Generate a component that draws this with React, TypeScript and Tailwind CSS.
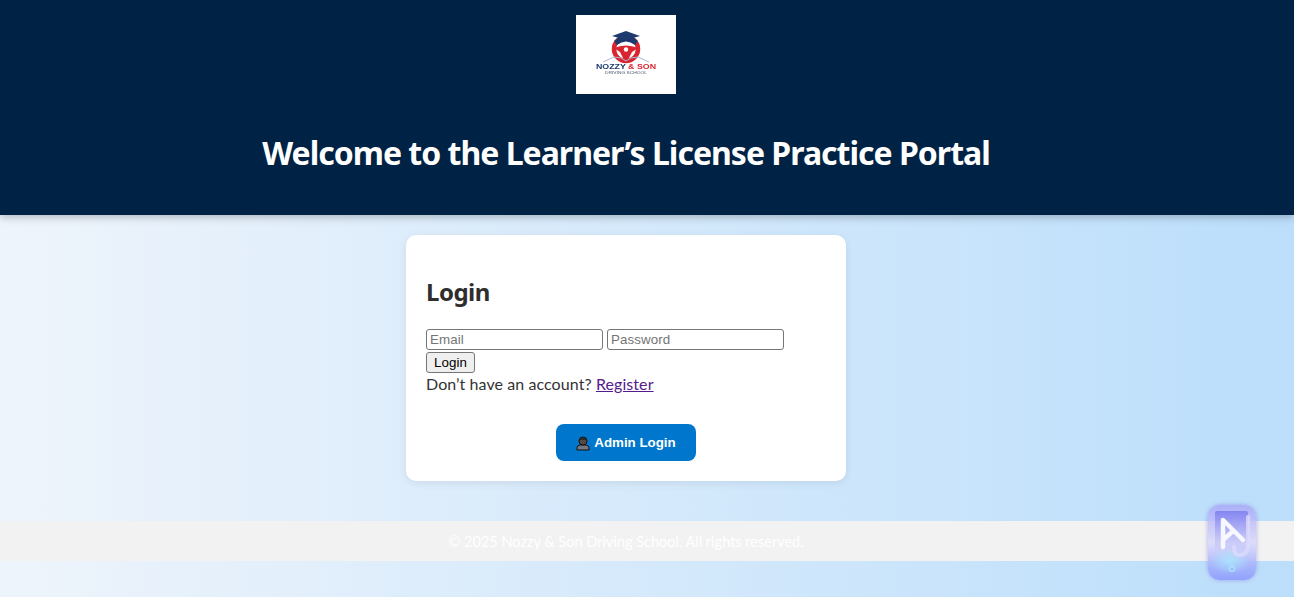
export default function App() {
  const seg = "font-['Lato','Noto_Sans',sans-serif]";
  const control = "font-['Liberation_Sans',sans-serif] text-[13.33px]";
  return (
    <div className={`relative h-[597px] w-full overflow-hidden bg-gradient-to-r from-[#eef4fb] to-[#bbdefb] ${seg}`}>
      <header className="relative z-10 flex h-[215px] flex-col bg-[#002244] pr-[42px] pt-[15px] shadow-[0_2px_8px_rgba(0,0,0,0.25)]">
        <div className="flex justify-center">
          <svg width="100" height="79" viewBox="0 0 100 79" className="bg-white">
            <g className="blur-[0.35px]">
              <circle cx="50" cy="34" r="12" fill="none" stroke="#d9252f" strokeWidth="4.5" />
              <path d="M38 26 Q50 15 62 26 L59 30 Q50 23 41 30 Z" fill="#1d3a6e" />
              <path d="M36 21 L50 16 L64 21 L50 25 Z" fill="#1d3a6e" />
              <path d="M38 33 Q50 28 62 33 L56 37 L52 45 L48 45 L44 37 Z" fill="#d9252f" />
              <circle cx="50" cy="34.5" r="2.2" fill="#fff" />
              <path d="M27 47 L38 42 Q46 42 50 46 Q54 42 62 42 L73 47" fill="none" stroke="#a9b7cc" strokeWidth="1" />
              <text x="50" y="54" textAnchor="middle" fontSize="8" fontWeight="800" fontFamily="Liberation Sans, sans-serif" textLength="60" lengthAdjust="spacingAndGlyphs">
                <tspan fill="#1d3a6e">NOZZY </tspan>
                <tspan fill="#d9252f">&amp; SON</tspan>
              </text>
              <text x="50" y="58.5" textAnchor="middle" fontSize="4" fill="#44546a" fontFamily="Liberation Sans, sans-serif" textLength="42" lengthAdjust="spacingAndGlyphs">DRIVING SCHOOL</text>
            </g>
          </svg>
        </div>
        <h1 className="mt-[37px] text-center font-['Noto_Sans',sans-serif] text-[32px] font-bold leading-[44px] tracking-[-1px] text-white">Welcome to the Learner’s License Practice Portal</h1>
      </header>

      <main className="flex w-[1252px] flex-col items-center">
        <section className="mt-5 h-[246px] w-[440px] rounded-[10px] bg-white p-5 shadow-[0_2px_8px_rgba(0,0,0,0.08)]">
          <h2 className="mt-[21px] font-['Noto_Sans',sans-serif] text-2xl font-bold leading-8 tracking-[-0.5px] text-[#2e2e2e]">Login</h2>
          <form className="mt-[21px] text-base leading-[22px] tracking-[0.08px] text-[#333]">
            <div className="flex gap-1">
              <input placeholder="Email" className={`h-[21px] w-[177px] rounded-[3px] border border-[#767676] bg-white px-[3px] placeholder:text-[#757575] ${control}`} />
              <input placeholder="Password" className={`h-[21px] w-[177px] rounded-[3px] border border-[#767676] bg-white px-[3px] placeholder:text-[#757575] ${control}`} />
            </div>
            <button type="button" className={`mt-[2px] block h-[21px] w-[49px] rounded-[3px] border border-[#767676] bg-[#efefef] leading-none text-black ${control}`}>Login</button>
            <p>Don’t have an account? <a href="#" className="text-[#551a8b] underline">Register</a></p>
          </form>
          <div className="mt-[29px] flex justify-center">
            <button type="button" className={`flex h-[37px] w-[140px] items-center justify-center gap-[4px] rounded-lg bg-[#0077cc] pt-px font-bold text-white ${control}`}>
              <svg width="14" height="16" viewBox="0 0 14 16">
                <path d="M1 15 L1 12.5 Q1 10.5 4 10 L10 10 Q13 10.5 13 12.5 L13 15 Z" fill="#74787f" stroke="#111" strokeWidth="1" />
                <circle cx="7" cy="6" r="4" fill="#5a4a42" stroke="#111" strokeWidth="1" />
                <path d="M3 5 Q7 1 11 5" fill="#2a2a2a" />
              </svg>
              Admin Login
            </button>
          </div>
        </section>
      </main>

      <footer className="mt-10 flex h-10 items-center bg-[#f2f2f2] pr-[42px]">
        <p className="w-full pt-[2px] text-center text-[14.5px] text-white">© 2025 Nozzy &amp; Son Driving School. All rights reserved.</p>
      </footer>

      <div className="absolute left-[1208px] top-[505px] z-20 h-[75px] w-[48px] rounded-xl bg-gradient-to-b from-[#aaa7f8]/85 via-[#d4d4fb]/75 to-[#8f9efb]/95 shadow-[0_0_4px_rgba(120,110,220,0.55)]">
        <svg width="48" height="75" viewBox="0 0 48 75" className="blur-[0.4px]">
          <defs>
            <linearGradient id="screen" x1="0" y1="0" x2="0" y2="1">
              <stop offset="0" stopColor="#8385ef" />
              <stop offset="1" stopColor="#c9c8fa" stopOpacity="0.35" />
            </linearGradient>
            <radialGradient id="glow">
              <stop offset="0" stopColor="#a8e8fc" stopOpacity="0.85" />
              <stop offset="1" stopColor="#a8e8fc" stopOpacity="0" />
            </radialGradient>
          </defs>
          <rect x="7" y="6" width="33" height="40" rx="2" fill="url(#screen)" />
          <ellipse cx="22" cy="56" rx="20" ry="13" fill="url(#glow)" />
          <path d="M40 12 L40 40 Q40 50 31 50 Q26 50 26 42" fill="none" stroke="#dcdafc" strokeOpacity="0.8" strokeWidth="4" strokeLinecap="round" />
          <path d="M15 42 L15 15 L35 35 M15 35 L24 27" fill="none" stroke="#f7f7ff" strokeWidth="4.5" strokeLinecap="round" strokeLinejoin="round" />
          <circle cx="24" cy="64" r="2.5" fill="#8fc3fb" stroke="#c4f0fc" strokeWidth="1" />
        </svg>
      </div>
    </div>
  );
}
